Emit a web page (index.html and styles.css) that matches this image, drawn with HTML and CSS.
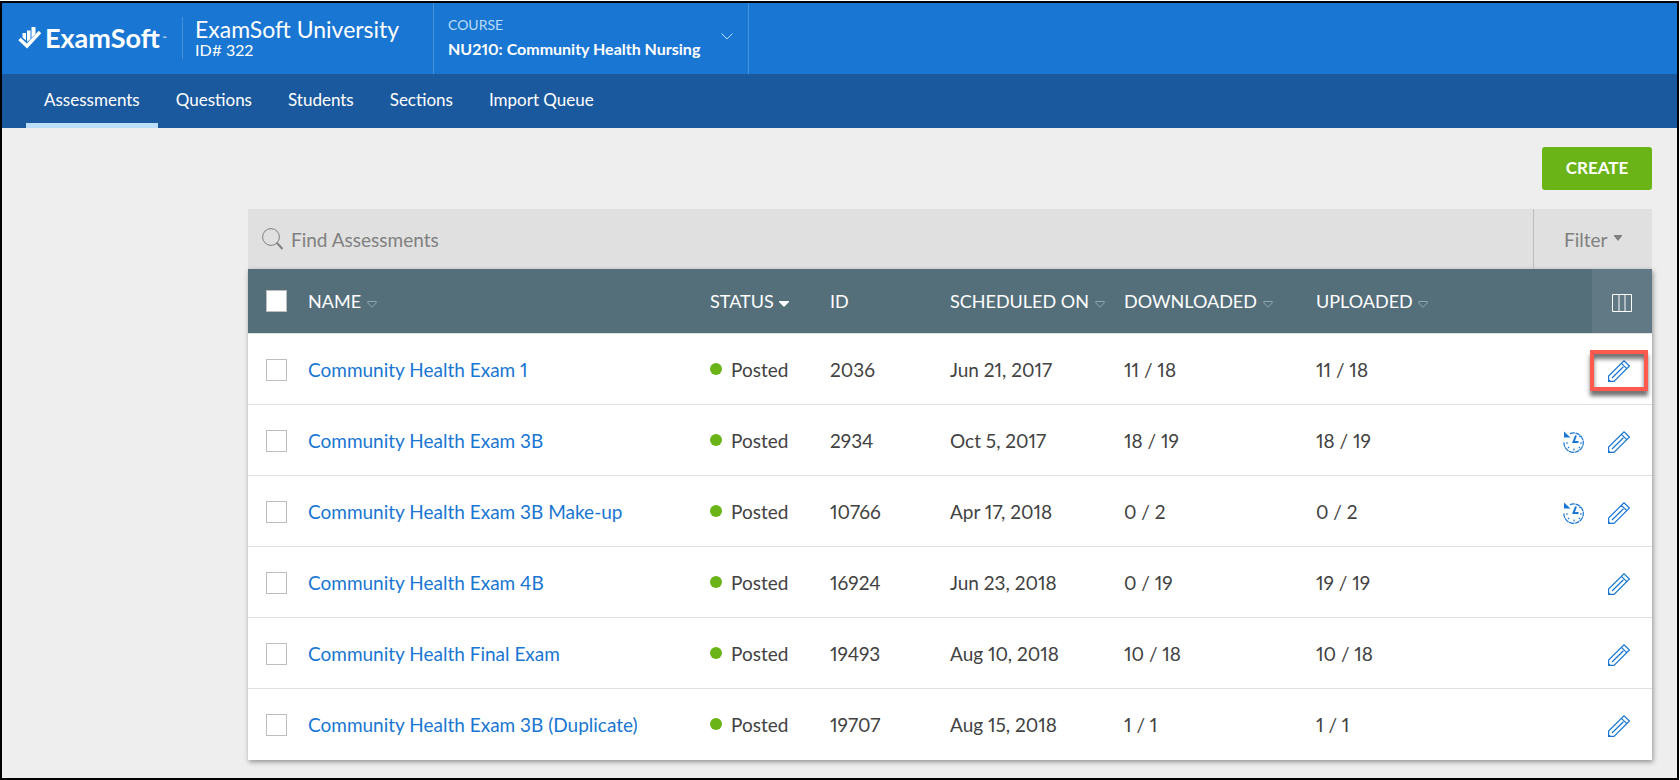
FILE: index.html
```html
<!DOCTYPE html>
<html lang="en">
<head>
    <meta charset="UTF-8">
    <meta name="viewport" content="width=device-width, initial-scale=1.0">
    <title>ExamSoft - Assessments</title>
    <link rel="stylesheet" href="styles.css">
</head>
<body>
    <!-- Shared icons -->
    <svg class="icon-defs" aria-hidden="true">
        <symbol id="icon-pencil" viewBox="0 0 22 22">
            <path d="M0.6 21.4V16L16 0.8L21.4 6L6 21.4Z M13.4 3.4L18.8 8.6 M4 18L15.4 6.8" fill="none" stroke="currentColor" stroke-width="1.2"/>
            <path d="M0.5 19L3 21.5H0.5Z" fill="currentColor"/>
        </symbol>
        <symbol id="icon-history" viewBox="0 0 22 22">
            <path d="M7 2.6A9.7 9.7 0 1 1 0.9 11.5" fill="none" stroke="currentColor" stroke-width="1.2" stroke-dasharray="5 0.6"/>
            <path d="M1 0.5V6.5H7.5Z" fill="currentColor"/>
            <path d="M13 4.5L10.5 11H15.5" fill="none" stroke="currentColor" stroke-width="2"/>
            <path d="M11 17.5V19.5M3 12H5M17 12H19M5 17L6.2 15.8M17 17L15.8 15.8M16.5 6L17.5 5" fill="none" stroke="currentColor" stroke-width="1.2"/>
        </symbol>
        <symbol id="icon-sort" viewBox="0 0 10 7">
            <path d="M0.8 0.5H9.2V2L5 6.3L0.8 2Z" fill="none" stroke="currentColor"/>
        </symbol>
    </svg>

    <header class="top-bar">
        <a class="logo" href="#">
            <svg class="logo-mark" viewBox="0 0 24 22" aria-hidden="true">
                <path d="M1.5 12L9 19L22 5" fill="none" stroke="#fff" stroke-width="3.4"/>
                <path d="M4.5 6H8V13.5L4.5 10.5Z M9 3.5H12.5V12L9 15Z M13.5 0H17.5V7L13.5 11Z" fill="#fff"/>
            </svg>
            <span>ExamSoft</span><small>™</small>
        </a>
        <div class="school">
            <div class="school-name">ExamSoft University</div>
            <div class="school-id">ID# 322</div>
        </div>
        <button class="course" type="button">
            <span>
                <span class="course-label">COURSE</span>
                <span class="course-name">NU210: Community Health Nursing</span>
            </span>
            <svg class="chevron" viewBox="0 0 12 7" aria-hidden="true">
                <path d="M0.5 0.5L6 6L11.5 0.5" fill="none" stroke="currentColor"/>
            </svg>
        </button>
    </header>

    <nav class="main-nav">
        <a class="active" href="#">Assessments</a>
        <a href="#">Questions</a>
        <a href="#">Students</a>
        <a href="#">Sections</a>
        <a href="#">Import Queue</a>
    </nav>

    <main class="content">
        <button class="create-btn" type="button">CREATE</button>

        <div class="search-bar">
            <label class="search-icon" for="search" aria-label="Find Assessments">
                <svg viewBox="0 0 22 22" aria-hidden="true">
                    <circle cx="9" cy="9" r="8.4" fill="none" stroke="currentColor"/>
                    <path d="M14.5 14.5L20.5 21" stroke="currentColor" stroke-width="2"/>
                </svg>
            </label>
            <input type="text" id="search" placeholder="Find Assessments">
            <button class="filter-btn" type="button">
                Filter
                <svg viewBox="0 0 8 6" aria-hidden="true"><path d="M0 0H8V1L4 6L0 1Z" fill="currentColor"/></svg>
            </button>
        </div>

        <table class="assessments">
            <colgroup>
                <col class="col-check">
                <col>
                <col class="col-status">
                <col class="col-id">
                <col class="col-scheduled">
                <col class="col-downloaded">
                <col class="col-uploaded">
                <col class="col-actions">
            </colgroup>
            <thead>
                <tr>
                    <th><input type="checkbox" aria-label="Select all"></th>
                    <th>NAME <svg class="sort"><use href="#icon-sort"/></svg></th>
                    <th>STATUS <svg class="sort sorted" viewBox="0 0 10 7"><path d="M0 0H10V1L5 6L0 1Z" fill="currentColor"/></svg></th>
                    <th>ID</th>
                    <th>SCHEDULED ON <svg class="sort"><use href="#icon-sort"/></svg></th>
                    <th>DOWNLOADED <svg class="sort"><use href="#icon-sort"/></svg></th>
                    <th>UPLOADED <svg class="sort"><use href="#icon-sort"/></svg></th>
                    <th class="columns-cell">
                        <button class="columns-btn" type="button" aria-label="Columns">
                            <svg viewBox="0 0 20 18" aria-hidden="true">
                                <path d="M0.5 0.5H19.5V17.5H0.5Z M7 0.5V17.5 M13 0.5V17.5" fill="none" stroke="currentColor"/>
                            </svg>
                        </button>
                    </th>
                </tr>
            </thead>
            <tbody>
                <tr>
                    <td><input type="checkbox" aria-label="Select Community Health Exam 1"></td>
                    <td><a href="#">Community Health Exam 1</a></td>
                    <td><span class="dot"></span>Posted</td>
                    <td>2036</td>
                    <td>Jun 21, 2017</td>
                    <td>11 / 18</td>
                    <td>11 / 18</td>
                    <td>
                        <div class="actions">
                            <button class="highlighted" type="button" aria-label="Edit"><svg><use href="#icon-pencil"/></svg></button>
                        </div>
                    </td>
                </tr>
                <tr>
                    <td><input type="checkbox" aria-label="Select Community Health Exam 3B"></td>
                    <td><a href="#">Community Health Exam 3B</a></td>
                    <td><span class="dot"></span>Posted</td>
                    <td>2934</td>
                    <td>Oct 5, 2017</td>
                    <td>18 / 19</td>
                    <td>18 / 19</td>
                    <td>
                        <div class="actions">
                            <button type="button" aria-label="History"><svg><use href="#icon-history"/></svg></button>
                            <button type="button" aria-label="Edit"><svg><use href="#icon-pencil"/></svg></button>
                        </div>
                    </td>
                </tr>
                <tr>
                    <td><input type="checkbox" aria-label="Select Community Health Exam 3B Make-up"></td>
                    <td><a href="#">Community Health Exam 3B Make-up</a></td>
                    <td><span class="dot"></span>Posted</td>
                    <td>10766</td>
                    <td>Apr 17, 2018</td>
                    <td>0 / 2</td>
                    <td>0 / 2</td>
                    <td>
                        <div class="actions">
                            <button type="button" aria-label="History"><svg><use href="#icon-history"/></svg></button>
                            <button type="button" aria-label="Edit"><svg><use href="#icon-pencil"/></svg></button>
                        </div>
                    </td>
                </tr>
                <tr>
                    <td><input type="checkbox" aria-label="Select Community Health Exam 4B"></td>
                    <td><a href="#">Community Health Exam 4B</a></td>
                    <td><span class="dot"></span>Posted</td>
                    <td>16924</td>
                    <td>Jun 23, 2018</td>
                    <td>0 / 19</td>
                    <td>19 / 19</td>
                    <td>
                        <div class="actions">
                            <button type="button" aria-label="Edit"><svg><use href="#icon-pencil"/></svg></button>
                        </div>
                    </td>
                </tr>
                <tr>
                    <td><input type="checkbox" aria-label="Select Community Health Final Exam"></td>
                    <td><a href="#">Community Health Final Exam</a></td>
                    <td><span class="dot"></span>Posted</td>
                    <td>19493</td>
                    <td>Aug 10, 2018</td>
                    <td>10 / 18</td>
                    <td>10 / 18</td>
                    <td>
                        <div class="actions">
                            <button type="button" aria-label="Edit"><svg><use href="#icon-pencil"/></svg></button>
                        </div>
                    </td>
                </tr>
                <tr>
                    <td><input type="checkbox" aria-label="Select Community Health Exam 3B (Duplicate)"></td>
                    <td><a href="#">Community Health Exam 3B (Duplicate)</a></td>
                    <td><span class="dot"></span>Posted</td>
                    <td>19707</td>
                    <td>Aug 15, 2018</td>
                    <td>1 / 1</td>
                    <td>1 / 1</td>
                    <td>
                        <div class="actions">
                            <button type="button" aria-label="Edit"><svg><use href="#icon-pencil"/></svg></button>
                        </div>
                    </td>
                </tr>
            </tbody>
        </table>
    </main>
</body>
</html>
```
FILE: styles.css
```css
:root {
    --blue: #1976d2;
    --dark-blue: #1b599e;
    --slate: #546e7a;
    --green: #6ab417;
    --line: #e0e0e0;
}

*,
*::after {
    margin: 0;
    padding: 0;
    box-sizing: border-box;
}

html {
    background-color: white;
    padding: 1px 1px 0 0;
}

body {
    min-height: calc(100vh - 1px);
    border: 2px solid black;
    background-color: #eee;
    color: #424242;
    font-family: Lato, sans-serif;
    font-size: 19px;
    font-variant-numeric: proportional-nums;
    line-height: 24px;
}

button {
    border: none;
    background: none;
    color: inherit;
    font: inherit;
    cursor: pointer;
}

a {
    color: var(--blue);
    text-decoration: none;
}

.icon-defs {
    display: none;
}

/* Header */
.top-bar {
    display: flex;
    align-items: center;
    height: 71px;
    padding: 0 0 2px 16px;
    background-color: var(--blue);
    color: white;
}

.logo {
    display: flex;
    align-items: center;
    gap: 3px;
    width: 164px;
    color: white;
    font-size: 27px;
    font-weight: bold;
}

.logo-mark {
    width: 24px;
    height: 22px;
}

.logo small {
    align-self: flex-start;
    font-size: 5px;
}

.school {
    width: 251px;
    padding-left: 12px;
    border-left: 1px solid rgba(255, 255, 255, 0.2);
}

.school-name {
    font-size: 23px;
    line-height: 24px;
}

.school-id {
    font-size: 16px;
    line-height: 18px;
}

.course {
    display: flex;
    align-items: center;
    justify-content: space-between;
    align-self: stretch;
    width: 316px;
    margin-bottom: -2px;
    padding: 0 15px 4px 14px;
    border: 1px solid rgba(255, 255, 255, 0.2);
    border-width: 0 1px;
    text-align: left;
}

.course-label,
.course-name {
    display: block;
    font-size: 14px;
}

.course-label {
    color: #bbdefb;
}

.course-name {
    font-size: 16px;
    font-weight: bold;
}

.chevron {
    width: 12px;
    height: 7px;
    color: #bbdefb;
}

/* Navigation */
.main-nav {
    display: flex;
    height: 54px;
    padding-left: 24px;
    background-color: var(--dark-blue);
    font-size: 17px;
}

.main-nav a {
    padding: 14px 18px 0;
    border-bottom: 5px solid transparent;
    color: white;
}

.main-nav a.active {
    border-color: #bbdefb;
}

/* Content */
.content {
    padding: 19px 25px 17px 246px;
}

.create-btn {
    display: block;
    width: 110px;
    height: 43px;
    margin: 0 0 19px auto;
    padding-bottom: 2px;
    border-radius: 3px;
    background-color: var(--green);
    color: white;
    font-size: 17px;
    font-weight: bold;
}

.search-bar {
    display: flex;
    align-items: center;
    height: 60px;
    padding-left: 14px;
    background-color: var(--line);
    color: #808080;
}

.search-icon svg {
    display: block;
    width: 22px;
    height: 22px;
}

.search-bar input {
    flex: 1;
    padding: 2px 0 0 7px;
    border: none;
    background: none;
    color: inherit;
    font: inherit;
}

.search-bar input::placeholder {
    color: inherit;
    opacity: 1;
}

.filter-btn {
    align-self: stretch;
    width: 119px;
    padding-top: 2px;
    border-left: 1px solid #bdbdbd;
}

.filter-btn svg {
    width: 8px;
    height: 6px;
    margin-left: 2px;
    vertical-align: 6px;
}

/* Table */
.assessments {
    width: 100%;
    border-collapse: collapse;
    table-layout: fixed;
    background-color: white;
    box-shadow: 1px 2px 5px rgba(0, 0, 0, 0.4);
}

.col-check {
    width: 60px;
}

.col-status,
.col-id {
    width: 120px;
}

.col-scheduled {
    width: 174px;
}

.col-downloaded,
.col-uploaded {
    width: 192px;
}

.col-actions {
    width: 144px;
}

.assessments th {
    height: 64px;
    background-color: var(--slate);
    color: white;
    font-size: 18px;
    font-weight: normal;
    text-align: left;
    white-space: nowrap;
}

.assessments td {
    height: 71px;
    padding-top: 2px;
    border-top: 1px solid var(--line);
}

.assessments input {
    display: block;
    appearance: none;
    width: 21px;
    height: 22px;
    margin-left: 18px;
    border: 1px solid #bdbdbd;
    background-color: white;
}

.sort {
    width: 10px;
    height: 7px;
    margin-left: 1px;
    color: #90a4ae;
}

.sort.sorted {
    color: white;
}

.assessments .columns-cell {
    background: linear-gradient(#607985, #607985) right / 60px 100% no-repeat var(--slate);
}

.columns-btn {
    display: block;
    width: 60px;
    height: 64px;
    margin-left: auto;
}

.columns-btn svg {
    width: 20px;
    height: 18px;
    vertical-align: middle;
}

.dot {
    display: inline-block;
    width: 12px;
    height: 12px;
    margin-right: 9px;
    border-radius: 50%;
    background-color: var(--green);
    vertical-align: 2px;
}

.actions {
    display: flex;
    justify-content: flex-end;
    gap: 23px;
    padding: 2px 22px 0 0;
}

.actions button {
    position: relative;
    width: 22px;
    height: 22px;
    color: var(--blue);
}

.actions svg {
    display: block;
    width: 22px;
    height: 22px;
}

/* Callout around the edit button */
.highlighted::after {
    content: "";
    position: absolute;
    top: -10px;
    left: -18px;
    width: 58px;
    height: 41px;
    border: 4px solid #ff5a4d;
    box-shadow: 0 5px 4px rgba(0, 0, 0, 0.55), inset 0 5px 4px rgba(0, 0, 0, 0.55);
}
```
